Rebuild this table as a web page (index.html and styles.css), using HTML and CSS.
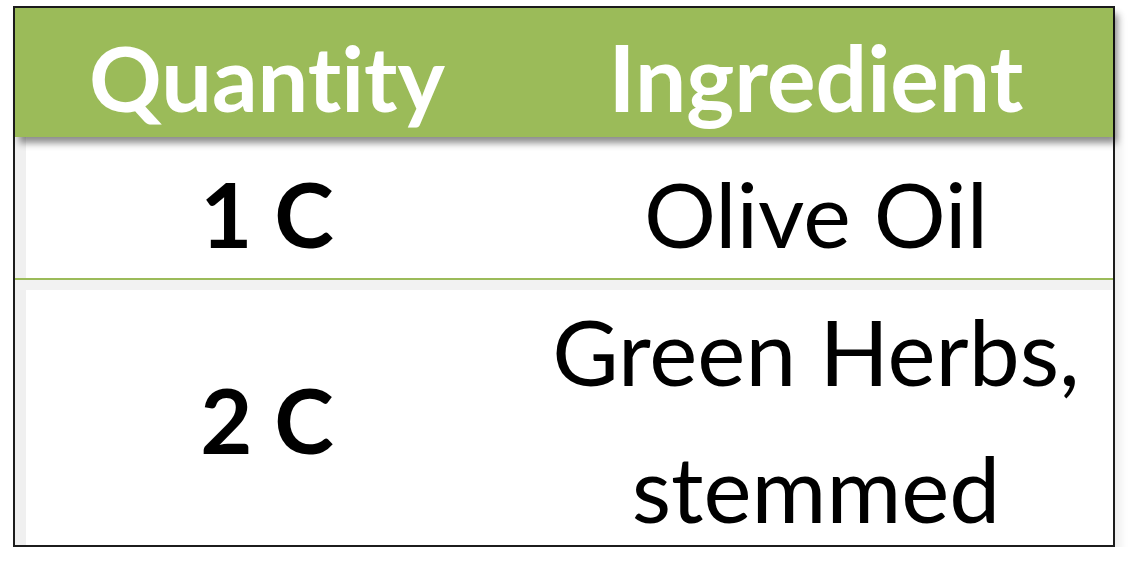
FILE: index.html
```html
<!DOCTYPE html>
<html>
<head>
<meta charset="utf-8">
<link rel="stylesheet" href="styles.css">
</head>
<body>
<div class="table">
  <div class="head">
    <div class="hcell">Quantity</div>
    <div class="hcell">Ingredient</div>
  </div>
  <div class="row row1">
    <div class="qty">1 C</div>
    <div class="ing">Olive Oil</div>
  </div>
  <div class="row row2">
    <div class="qty">2 C</div>
    <div class="ing">Green Herbs,<br>stemmed</div>
  </div>
</div>
</body>
</html>
```
FILE: styles.css
```css
html, body {
  margin: 0;
  padding: 0;
  background: #ffffff;
}
body {
  padding: 6px 0 0 13px;
  font-family: Lato, "Open Sans", sans-serif;
  font-variant-ligatures: none;
  font-feature-settings: "liga" 0, "clig" 0;
}
.table {
  width: 1098px;
  border: 2px solid #1c1c1c;
  display: flex;
  flex-direction: column;
  box-shadow: 6px 8px 8px rgba(0,0,0,0.07);
  position: relative;
}
.head {
  display: grid;
  grid-template-columns: 504px 1fr;
  height: 129px;
  background: #9bbb59;
  box-shadow: 4px 6px 7px rgba(0,0,0,0.45);
  position: relative;
  z-index: 2;
}
.hcell {
  display: flex;
  align-items: center;
  justify-content: center;
  padding-top: 9px;
  color: #ffffff;
  font-weight: 700;
  font-size: 90px;
  line-height: 1.2;
}
.hcell + .hcell {
  font-size: 91px;
}
.row {
  display: grid;
  grid-template-columns: 504px 1fr;
  background: #ffffff;
  box-shadow: inset 11px 0 0 #f0f0f0;
}
.row1 {
  height: 141px;
  border-bottom: 2px solid #9bbb59;
  position: relative;
  z-index: 1;
  box-shadow: inset 11px 0 0 #f0f0f0, 0 10px 0 #f2f2f2;
}
.row2 {
  height: 265px;
}
.qty, .ing {
  display: flex;
  justify-content: center;
  text-align: center;
  color: #000000;
  font-size: 90px;
}
.qty {
  font-weight: 700;
}
.row1 .qty, .row1 .ing {
  align-items: center;
  line-height: 1.2;
  padding-top: 10px;
}
.row2 .qty {
  align-items: center;
  line-height: 1.2;
  padding-top: 2px;
}
.row2 .ing {
  align-items: flex-start;
  font-size: 91px;
  line-height: 137px;
  padding-top: 2px;
}
```
